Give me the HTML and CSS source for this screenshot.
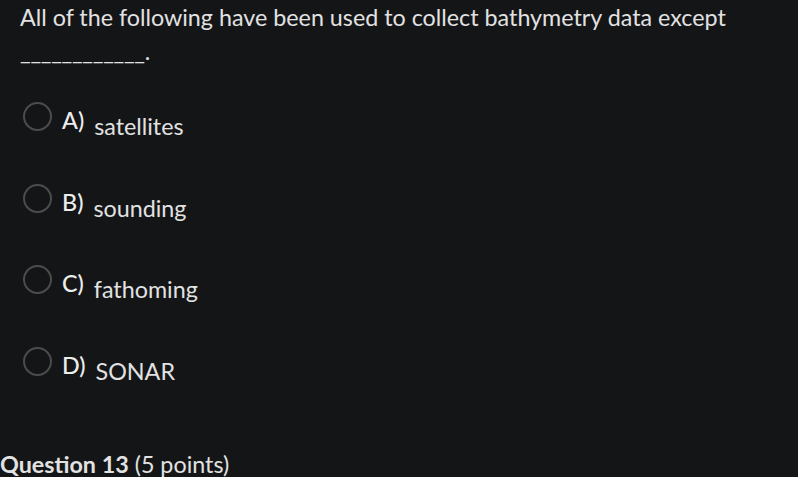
FILE: index.html
```html
<!DOCTYPE html>
<html>
<head>
<meta charset="utf-8">
<link rel="stylesheet" href="styles.css">
</head>
<body>
<div class="page">
  <div class="question">
    <p class="stem">All of the following have been used to collect bathymetry data except</p>
    <p class="blank">____________.</p>
    <ul class="options">
      <li class="option"><span class="radio"></span><span class="letter">A)</span><span class="text">satellites</span></li>
      <li class="option"><span class="radio"></span><span class="letter">B)</span><span class="text">sounding</span></li>
      <li class="option"><span class="radio"></span><span class="letter">C)</span><span class="text">fathoming</span></li>
      <li class="option"><span class="radio"></span><span class="letter">D)</span><span class="text">SONAR</span></li>
    </ul>
  </div>
  <h2 class="next"><b>Question 13</b> (5 points)</h2>
</div>
</body>
</html>
```
FILE: styles.css
```css
html, body {
  margin: 0;
  padding: 0;
  background: #141517;
  height: 100%;
  overflow: hidden;
}
.page {
  font-family: Lato, "Open Sans", sans-serif;
  color: #e2e2e2;
  font-size: 23.3px;
}
.question {
  padding-left: 20px;
}
.stem {
  margin: 0;
  padding-top: 3px;
  line-height: 28px;
}
.blank {
  margin: 5.5px 0 0 0;
  line-height: 28px;
  letter-spacing: -0.3px;
}
.options {
  list-style: none;
  margin: 37.5px 0 0 0;
  padding: 0;
  display: flex;
  flex-direction: column;
  gap: 43.67px;
}
.option {
  display: flex;
  align-items: flex-start;
  height: 38px;
  line-height: 28px;
}
.radio {
  width: 29px;
  height: 29px;
  border: 2px solid #4c4c4c;
  border-radius: 50%;
  box-sizing: border-box;
  margin-left: 3px;
  margin-right: 10px;
  flex: none;
}
.letter {
  font-weight: 500;
  color: #ececec;
  margin-top: 4px;
  margin-right: 10px;
}
.text {
  margin-top: 10px;
}
.next {
  margin: 65px 0 0 0;
  font-size: 23.3px;
  font-weight: 400;
  line-height: 28px;
}
.next b {
  font-weight: 700;
}
```
